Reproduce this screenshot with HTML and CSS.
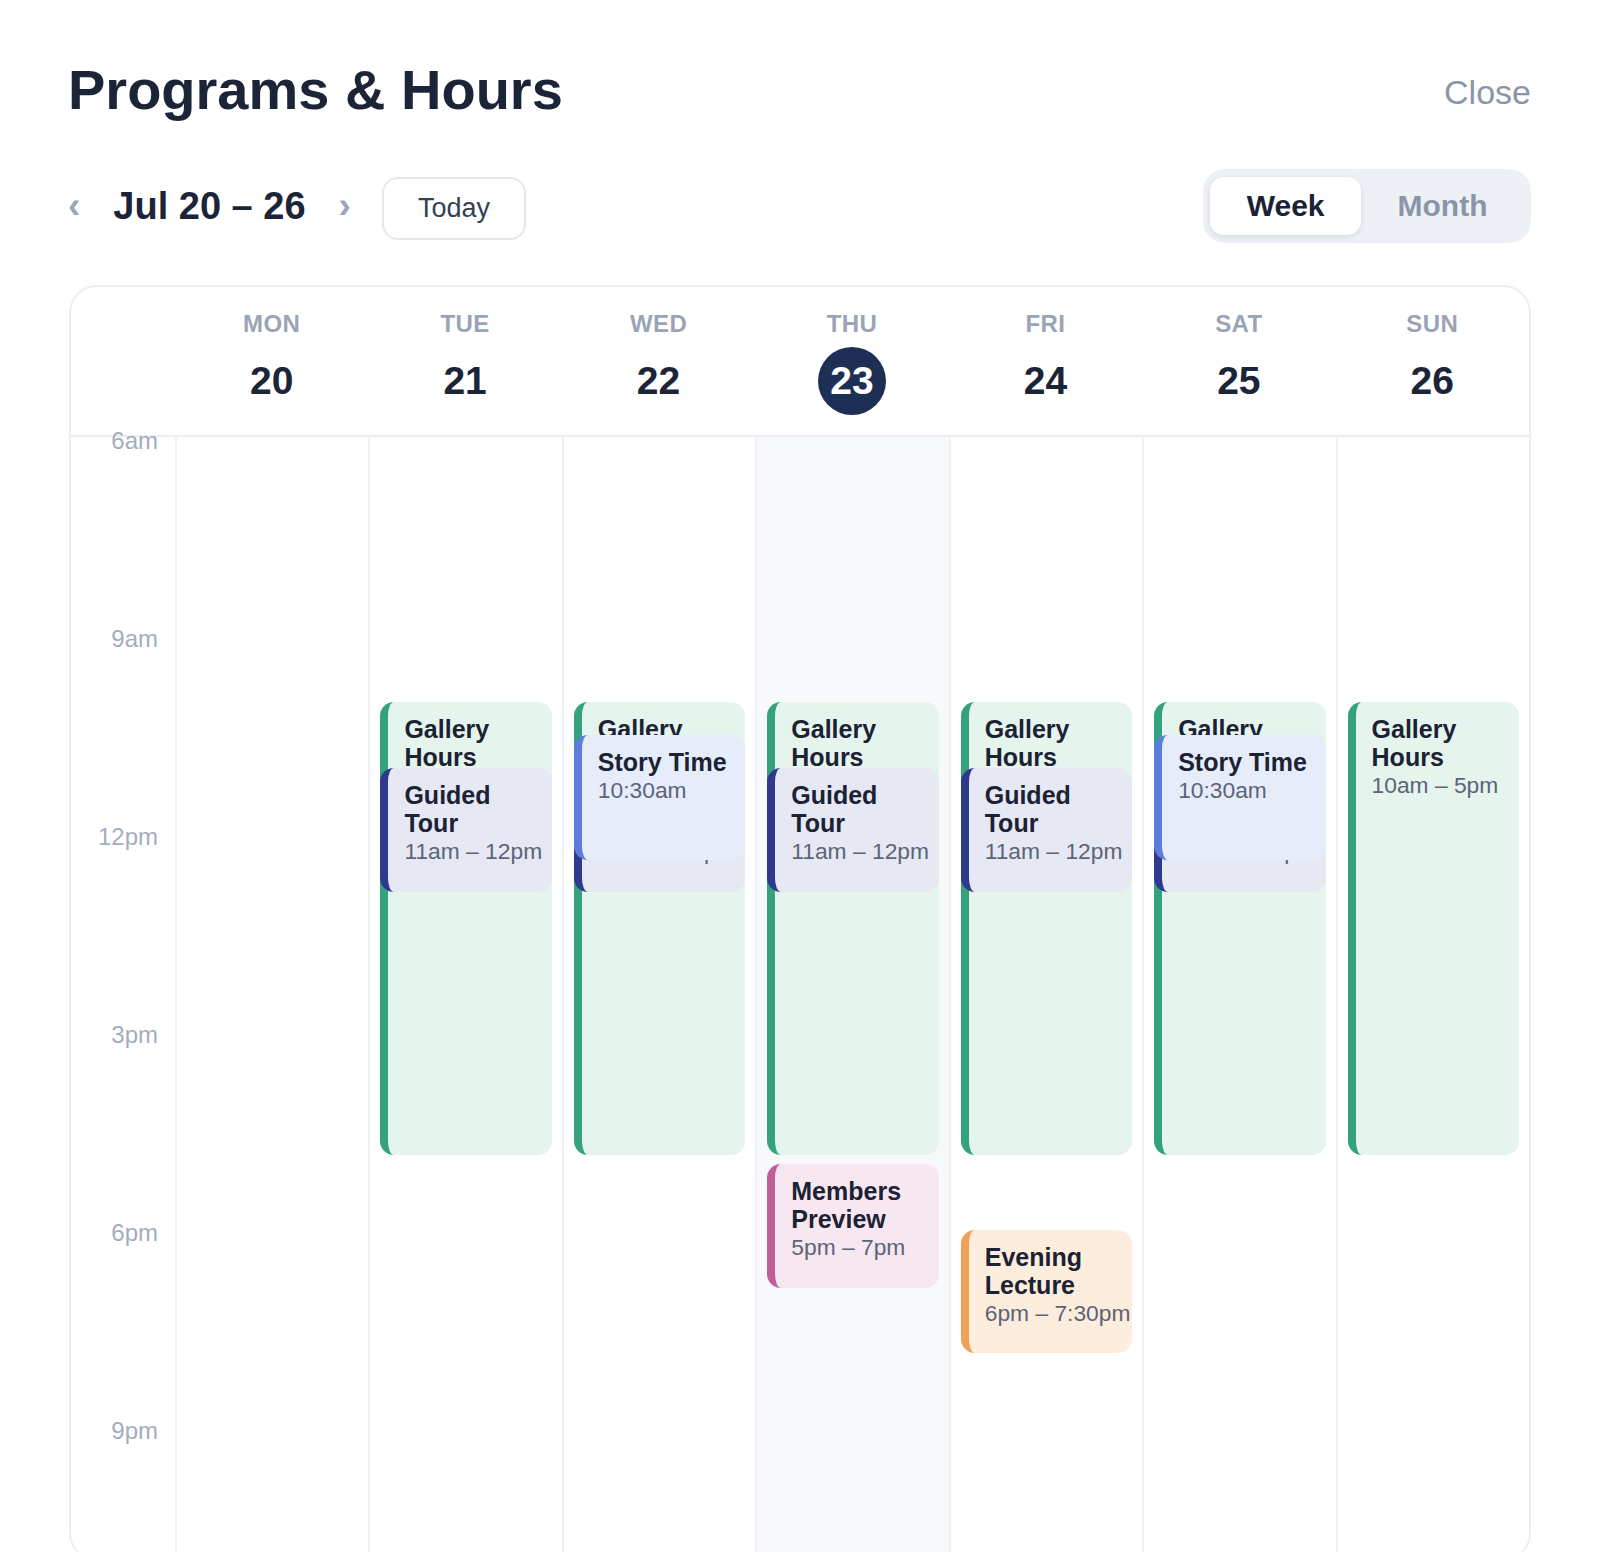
FILE: index.html
```html
<!DOCTYPE html>
<html lang="en">
<head>
<meta charset="utf-8">
<title>Programs &amp; Hours</title>
<link rel="stylesheet" href="styles.css">
</head>
<body>
<div class="page">
  <header class="topbar">
    <h1 class="title">Programs &amp; Hours</h1>
    <button class="close">Close</button>
  </header>

  <div class="toolbar">
    <div class="nav">
      <button class="chev">‹</button>
      <div class="range">Jul 20 – 26</div>
      <button class="chev">›</button>
      <button class="today">Today</button>
    </div>
    <div class="seg">
      <button class="seg-btn active">Week</button>
      <button class="seg-btn">Month</button>
    </div>
  </div>

  <div class="card">
    <div class="head">
      <div class="gutter"></div>
      <div class="dh"><span class="dname">MON</span><span class="dnum">20</span></div>
      <div class="dh"><span class="dname">TUE</span><span class="dnum">21</span></div>
      <div class="dh"><span class="dname">WED</span><span class="dnum">22</span></div>
      <div class="dh"><span class="dname">THU</span><span class="dnum is-today">23</span></div>
      <div class="dh"><span class="dname">FRI</span><span class="dnum">24</span></div>
      <div class="dh"><span class="dname">SAT</span><span class="dnum">25</span></div>
      <div class="dh"><span class="dname">SUN</span><span class="dnum">26</span></div>
    </div>

    <div class="grid">
      <div class="times">
        <span class="tl" style="top:-8px">6am</span>
        <span class="tl" style="top:190px">9am</span>
        <span class="tl" style="top:388px">12pm</span>
        <span class="tl" style="top:586px">3pm</span>
        <span class="tl" style="top:784px">6pm</span>
        <span class="tl" style="top:982px">9pm</span>
      </div>

      <div class="col"></div>

      <div class="col">
        <div class="ev ev-gallery" style="top:265px;height:453px"><div class="ev-title">Gallery Hours</div><div class="ev-time">10am – 5pm</div></div>
        <div class="ev ev-tour" style="top:331px;height:124px"><div class="ev-title">Guided Tour</div><div class="ev-time">11am – 12pm</div></div>
      </div>

      <div class="col">
        <div class="ev ev-gallery" style="top:265px;height:453px"><div class="ev-title">Gallery Hours</div><div class="ev-time">10am – 5pm</div></div>
        <div class="ev ev-tour" style="top:331px;height:124px"><div class="ev-title">Guided Tour</div><div class="ev-time">11am – 12pm</div></div>
        <div class="ev ev-story" style="top:298px;height:125px"><div class="ev-title">Story Time</div><div class="ev-time">10:30am</div></div>
      </div>

      <div class="col col-today">
        <div class="ev ev-gallery" style="top:265px;height:453px"><div class="ev-title">Gallery Hours</div><div class="ev-time">10am – 5pm</div></div>
        <div class="ev ev-tour" style="top:331px;height:124px"><div class="ev-title">Guided Tour</div><div class="ev-time">11am – 12pm</div></div>
        <div class="ev ev-members" style="top:727px;height:124px"><div class="ev-title">Members Preview</div><div class="ev-time">5pm – 7pm</div></div>
      </div>

      <div class="col">
        <div class="ev ev-gallery" style="top:265px;height:453px"><div class="ev-title">Gallery Hours</div><div class="ev-time">10am – 5pm</div></div>
        <div class="ev ev-tour" style="top:331px;height:124px"><div class="ev-title">Guided Tour</div><div class="ev-time">11am – 12pm</div></div>
        <div class="ev ev-lecture" style="top:793px;height:123px"><div class="ev-title">Evening Lecture</div><div class="ev-time">6pm – 7:30pm</div></div>
      </div>

      <div class="col">
        <div class="ev ev-gallery" style="top:265px;height:453px"><div class="ev-title">Gallery Hours</div><div class="ev-time">10am – 5pm</div></div>
        <div class="ev ev-tour" style="top:331px;height:124px"><div class="ev-title">Guided Tour</div><div class="ev-time">11am – 12pm</div></div>
        <div class="ev ev-story" style="top:298px;height:125px"><div class="ev-title">Story Time</div><div class="ev-time">10:30am</div></div>
      </div>

      <div class="col">
        <div class="ev ev-gallery" style="top:265px;height:453px"><div class="ev-title">Gallery Hours</div><div class="ev-time">10am – 5pm</div></div>
      </div>
    </div>
  </div>
</div>
</body>
</html>
```

FILE: styles.css
```css
* { box-sizing: border-box; }

html, body {
  margin: 0;
  padding: 0;
  background: #ffffff;
}

body {
  font-family: "Liberation Sans", Arial, sans-serif;
  color: #1d2537;
}

button {
  font: inherit;
  border: none;
  background: none;
  padding: 0;
  margin: 0;
  cursor: pointer;
}

.page {
  height: 100vh;
  overflow: hidden;
  padding: 57px 69px 0 68px;
}

/* top bar */
.topbar {
  display: flex;
  justify-content: space-between;
  align-items: flex-start;
}

.title {
  margin: 0;
  font-size: 56px;
  font-weight: 700;
  color: #1c2437;
  line-height: normal;
}

.close {
  margin-top: 16px;
  font-size: 34px;
  color: #8b95a8;
  line-height: normal;
}

/* toolbar */
.toolbar {
  margin-top: 47px;
  height: 74px;
  display: flex;
  justify-content: space-between;
  align-items: center;
}

.nav {
  display: flex;
  align-items: center;
  gap: 33px;
}

.chev {
  font-size: 37px;
  font-weight: 700;
  color: #9aa5b8;
  line-height: normal;
}

.range {
  font-size: 38px;
  font-weight: 700;
  color: #1c2437;
  line-height: normal;
}

.today {
  height: 63px;
  margin-top: 5px;
  margin-left: -2px;
  padding: 0 34px;
  border: 2px solid #e3e8ef;
  border-radius: 16px;
  font-size: 27px;
  color: #334155;
  display: flex;
  align-items: center;
}

.seg {
  display: flex;
  padding: 8px 7px;
  background: #edf1f6;
  border-radius: 22px;
}

.seg-btn {
  height: 58px;
  padding: 0 36.5px;
  border-radius: 14px;
  font-size: 30px;
  font-weight: 700;
  color: #8b95a8;
}

.seg-btn.active {
  background: #ffffff;
  color: #1a2236;
  box-shadow: 0 2px 6px rgba(15, 23, 42, 0.09);
}

/* calendar card */
.card {
  margin-top: 42px;
  margin-left: 1px;
  border: 2px solid #ebeef4;
  border-radius: 28px;
  overflow: hidden;
}

.head {
  display: grid;
  grid-template-columns: 104px repeat(7, 1fr);
  padding: 23px 0 20px;
  border-bottom: 2px solid #ebeef4;
}

.dh {
  display: flex;
  flex-direction: column;
  align-items: center;
}

.dname {
  font-size: 24px;
  font-weight: 700;
  letter-spacing: 0.4px;
  color: #9aa4b6;
  line-height: normal;
}

.dnum {
  margin-top: 9px;
  width: 68px;
  height: 68px;
  border-radius: 50%;
  display: flex;
  align-items: center;
  justify-content: center;
  font-size: 39px;
  font-weight: 700;
  color: #1c2437;
}

.dnum.is-today {
  background: #1e2f56;
  color: #ffffff;
}

.grid {
  display: grid;
  grid-template-columns: 104px repeat(7, 1fr);
  height: 1122px;
}

.times {
  position: relative;
}

.tl {
  position: absolute;
  right: 17px;
  font-size: 24px;
  line-height: 24px;
  color: #a3adbe;
}

.col {
  position: relative;
  border-left: 2px solid #eef0f5;
}

.col-today {
  background: #f8f9fb;
}

/* events */
.ev {
  position: absolute;
  left: 10px;
  right: 10px;
  border-left: 8px solid;
  border-radius: 14px;
  padding: 13px 12px 0 16px;
  overflow: hidden;
}

.ev-title {
  font-size: 25px;
  font-weight: 700;
  color: #1b2233;
  line-height: 28px;
}

.ev-time {
  margin-top: 1px;
  font-size: 22.8px;
  color: #5b6478;
  white-space: nowrap;
  line-height: normal;
}

.ev-gallery { background: #e5f4ec; border-left-color: #35a27f; }
.ev-tour    { background: #e6e8f3; border-left-color: #2f3a8e; }
.ev-story   { background: #e6ecfa; border-left-color: #5b7edd; }
.ev-members { background: #f6e7f0; border-left-color: #c05e99; }
.ev-lecture { background: #fdeddc; border-left-color: #f0a058; }
```
